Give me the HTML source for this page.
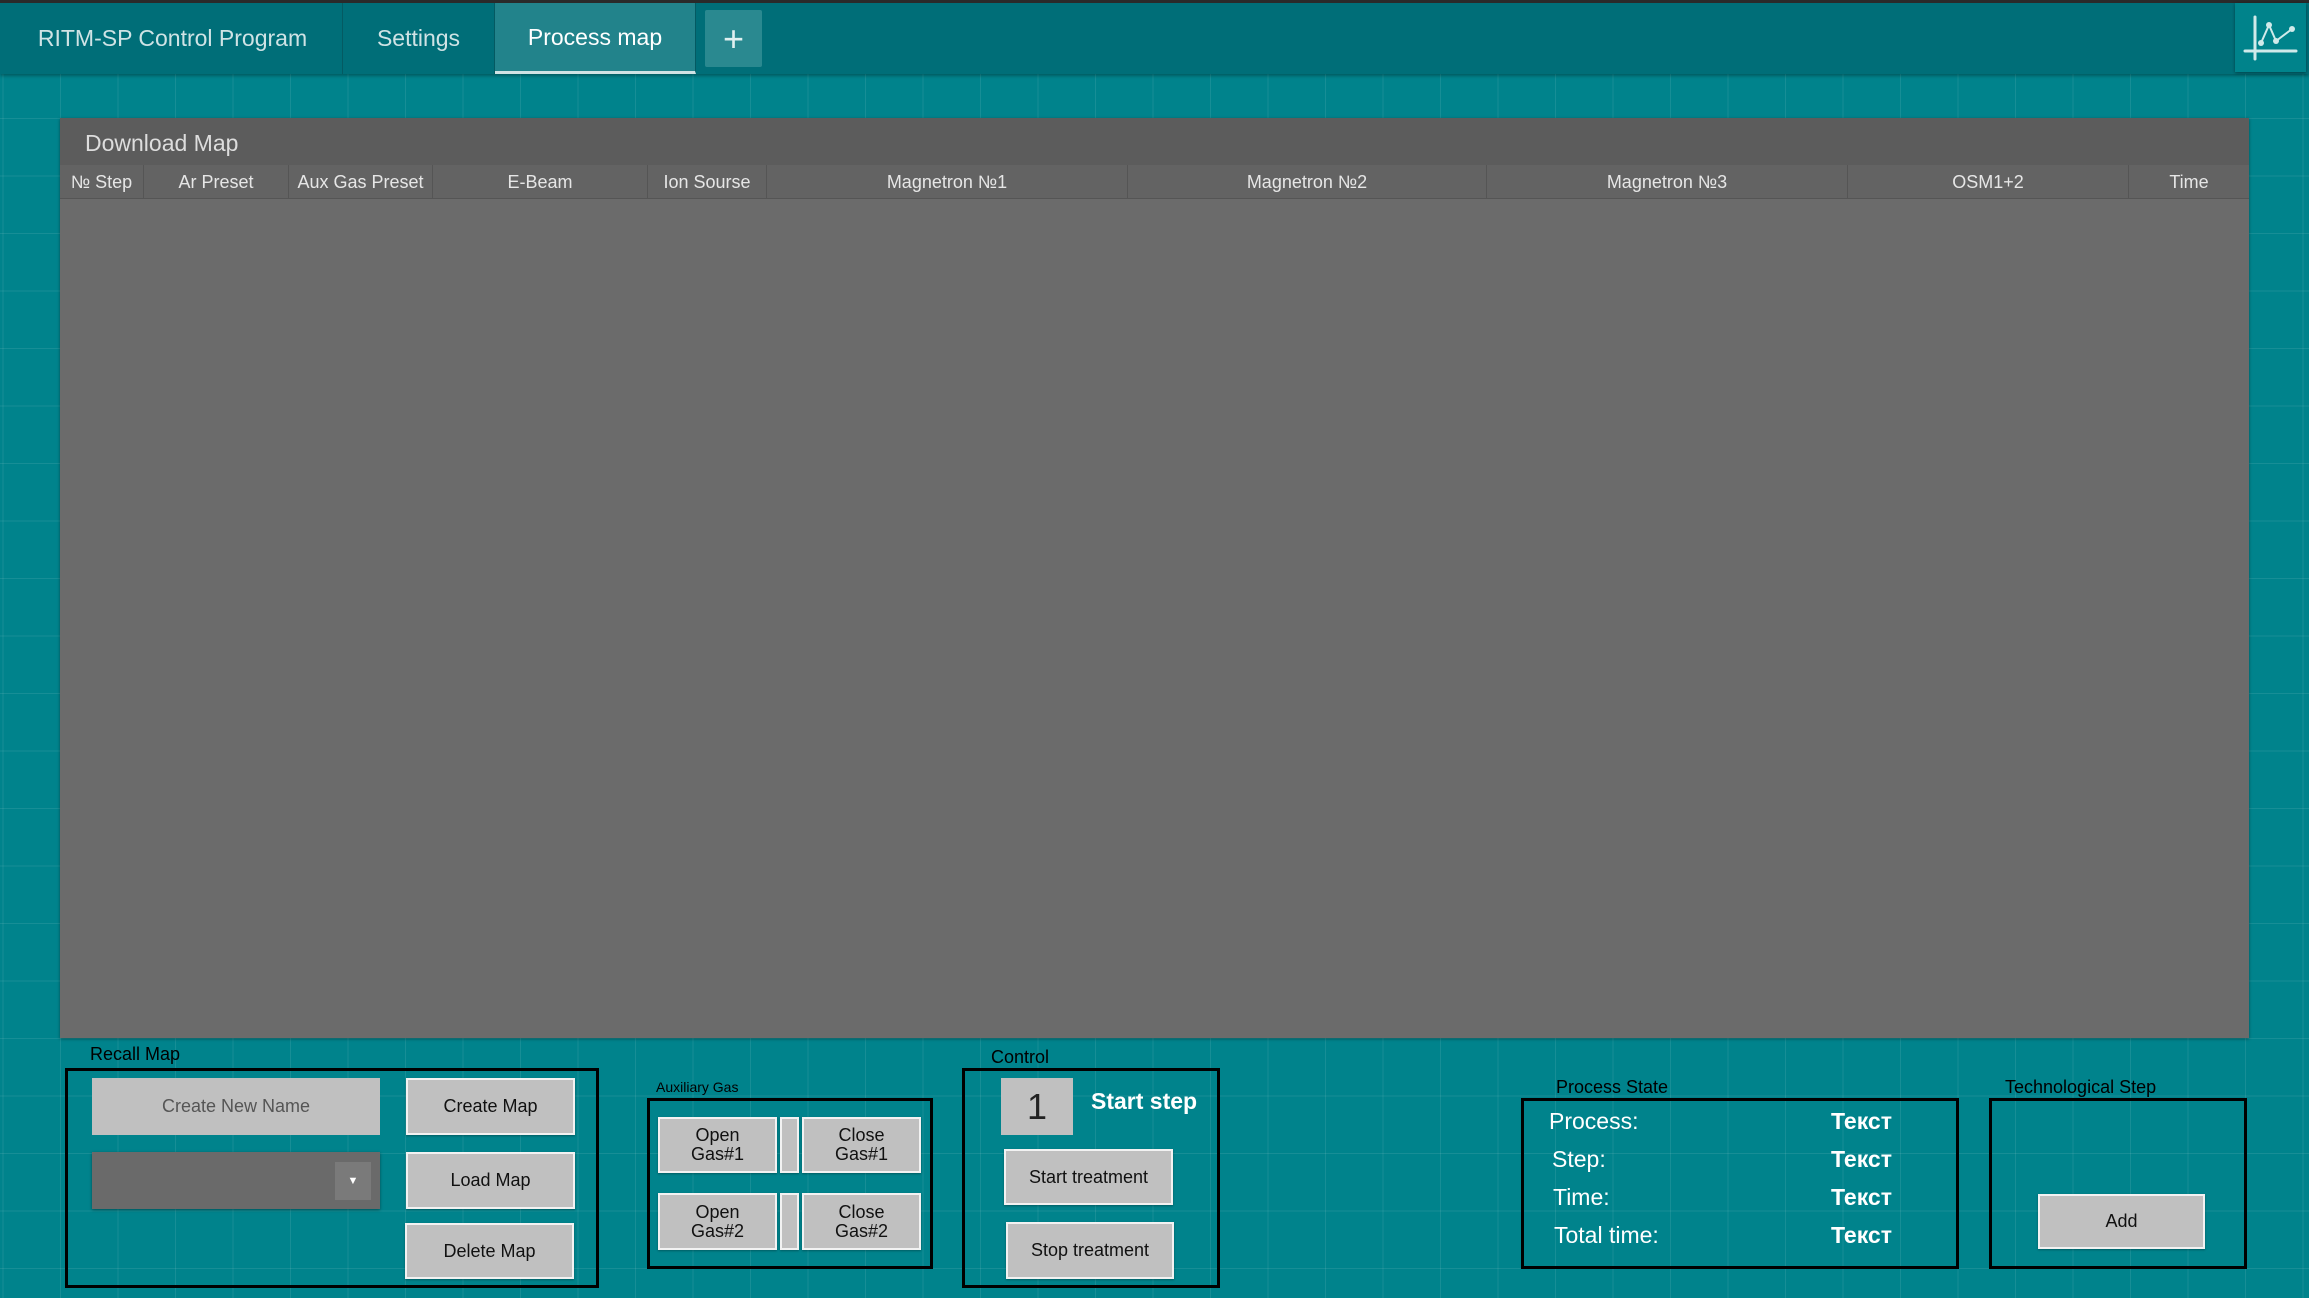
<!DOCTYPE html>
<html><head><meta charset="utf-8"><style>
*{margin:0;padding:0;box-sizing:border-box}
body{width:2309px;height:1298px;overflow:hidden;position:relative;font-family:"Liberation Sans",sans-serif;
background-color:#00838c;
background-image:linear-gradient(to right,rgba(255,255,255,0.09) 1px,transparent 1px),linear-gradient(to bottom,rgba(255,255,255,0.09) 1px,transparent 1px);
background-size:57.5px 57.5px;background-position:2.5px 3px}
.a{position:absolute}
.top{left:0;top:0;width:2309px;height:74px;background:#006e78;border-top:3px solid #2a2a2a;box-shadow:0 2px 3px rgba(0,0,0,.3)}
.tab{top:3px;height:71px;display:flex;align-items:center;justify-content:center;color:#cfe3e5;font-size:23px;border-right:1px solid #045a62}
.ph{left:60px;top:118px;width:2189px;height:920px;background:#6b6b6b;box-shadow:0 1px 3px rgba(0,0,0,.4)}
.hd{left:60px;top:118px;width:2189px;height:47px;background:#5c5c5c;color:#ddd;font-size:23px;padding:12px 0 0 25px}
.hr{left:60px;top:165px;width:2189px;height:34px;background:#636363;border-bottom:1px solid #555}
.c{top:165px;height:34px;color:#e6e6e6;font-size:18px;display:flex;align-items:center;justify-content:center;border-right:1px solid #555}
.box{border:3px solid #000}
.lbl{color:#000;font-size:18px}
.btn{background:#c0c0c0;border:2px solid #f2f2f2;display:flex;align-items:center;justify-content:center;text-align:center;color:#111;font-size:18px;line-height:19px;box-shadow:0 1px 2px rgba(0,0,0,.3)}
.w{color:#fff;font-size:23px}
</style></head><body>
<div class="a top"></div>
<div class="a tab" style="left:3px;width:340px">RITM-SP Control Program</div>
<div class="a tab" style="left:343px;width:152px">Settings</div>
<div class="a tab" style="left:495px;width:201px;background:#22838b;color:#fff;border-bottom:3px solid #cfe3e5">Process map</div>
<div class="a" style="left:705px;top:10px;width:57px;height:57px;background:#2a8990;border-radius:2px;color:#e0f0f0;font-size:36px;display:flex;align-items:center;justify-content:center;font-weight:300">+</div>
<div class="a" style="left:2235px;top:3px;width:71px;height:69px;background:#00838b;box-shadow:0 1px 3px rgba(0,0,0,.4)">
<svg width="71" height="69" viewBox="0 0 71 69"><g stroke="#d0eaea" stroke-width="3" fill="none" stroke-linecap="round"><path d="M20 14V56M10 48H61"/><path d="M26 40L34 22L41 38L57 26" stroke-width="2"/></g><g fill="#d0eaea"><circle cx="26" cy="40" r="3"/><circle cx="34" cy="22" r="3"/><circle cx="41" cy="38" r="3"/><circle cx="57" cy="26" r="3"/></g></svg></div>

<div class="a ph"></div>
<div class="a hd">Download Map</div>
<div class="a hr"></div>
<div class="a c" style="left:60px;width:84px">№ Step</div>
<div class="a c" style="left:144px;width:145px">Ar Preset</div>
<div class="a c" style="left:289px;width:144px">Aux Gas Preset</div>
<div class="a c" style="left:433px;width:215px">E-Beam</div>
<div class="a c" style="left:648px;width:119px">Ion Sourse</div>
<div class="a c" style="left:767px;width:361px">Magnetron №1</div>
<div class="a c" style="left:1128px;width:359px">Magnetron №2</div>
<div class="a c" style="left:1487px;width:361px">Magnetron №3</div>
<div class="a c" style="left:1848px;width:281px">OSM1+2</div>
<div class="a c" style="left:2129px;width:120px;border:none">Time</div>

<div class="a lbl" style="left:90px;top:1044px">Recall Map</div>
<div class="a box" style="left:65px;top:1068px;width:534px;height:220px"></div>
<div class="a" style="left:92px;top:1078px;width:288px;height:57px;background:#c0c0c0;color:#555;font-size:18px;display:flex;align-items:center;justify-content:center">Create New Name</div>
<div class="a btn" style="left:406px;top:1078px;width:169px;height:57px">Create Map</div>
<div class="a" style="left:92px;top:1152px;width:288px;height:57px;background:#6a6a6a;box-shadow:0 1px 3px rgba(0,0,0,.4)"></div>
<div class="a" style="left:335px;top:1162px;width:36px;height:38px;background:#7a7a7a;color:#fff;font-size:11px;display:flex;align-items:center;justify-content:center">▼</div>
<div class="a btn" style="left:406px;top:1152px;width:169px;height:57px">Load Map</div>
<div class="a btn" style="left:405px;top:1223px;width:169px;height:56px">Delete Map</div>

<div class="a lbl" style="left:656px;top:1079px;font-size:14px">Auxiliary Gas</div>
<div class="a box" style="left:647px;top:1098px;width:286px;height:171px"></div>
<div class="a btn" style="left:658px;top:1117px;width:119px;height:56px">Open<br>Gas#1</div>
<div class="a btn" style="left:780px;top:1117px;width:19px;height:56px"></div>
<div class="a btn" style="left:802px;top:1117px;width:119px;height:56px">Close<br>Gas#1</div>
<div class="a btn" style="left:658px;top:1193px;width:119px;height:57px">Open<br>Gas#2</div>
<div class="a btn" style="left:780px;top:1193px;width:19px;height:57px"></div>
<div class="a btn" style="left:802px;top:1193px;width:119px;height:57px">Close<br>Gas#2</div>

<div class="a lbl" style="left:991px;top:1047px">Control</div>
<div class="a box" style="left:962px;top:1068px;width:258px;height:220px"></div>
<div class="a" style="left:1001px;top:1078px;width:72px;height:57px;background:#c0c0c0;color:#222;font-size:36px;display:flex;align-items:center;justify-content:center">1</div>
<div class="a w" style="left:1091px;top:1088px;font-weight:bold">Start step</div>
<div class="a btn" style="left:1004px;top:1149px;width:169px;height:56px">Start treatment</div>
<div class="a btn" style="left:1006px;top:1222px;width:168px;height:57px">Stop treatment</div>

<div class="a lbl" style="left:1556px;top:1077px">Process State</div>
<div class="a box" style="left:1521px;top:1098px;width:438px;height:171px"></div>
<div class="a w" style="left:1549px;top:1108px">Process:</div>
<div class="a w" style="left:1552px;top:1146px">Step:</div>
<div class="a w" style="left:1553px;top:1184px">Time:</div>
<div class="a w" style="left:1554px;top:1222px">Total time:</div>
<div class="a w" style="left:1831px;top:1108px;font-weight:bold">Текст</div>
<div class="a w" style="left:1831px;top:1146px;font-weight:bold">Текст</div>
<div class="a w" style="left:1831px;top:1184px;font-weight:bold">Текст</div>
<div class="a w" style="left:1831px;top:1222px;font-weight:bold">Текст</div>

<div class="a lbl" style="left:2005px;top:1077px">Technological Step</div>
<div class="a box" style="left:1989px;top:1098px;width:258px;height:171px"></div>
<div class="a btn" style="left:2038px;top:1194px;width:167px;height:55px">Add</div>
</body></html>
